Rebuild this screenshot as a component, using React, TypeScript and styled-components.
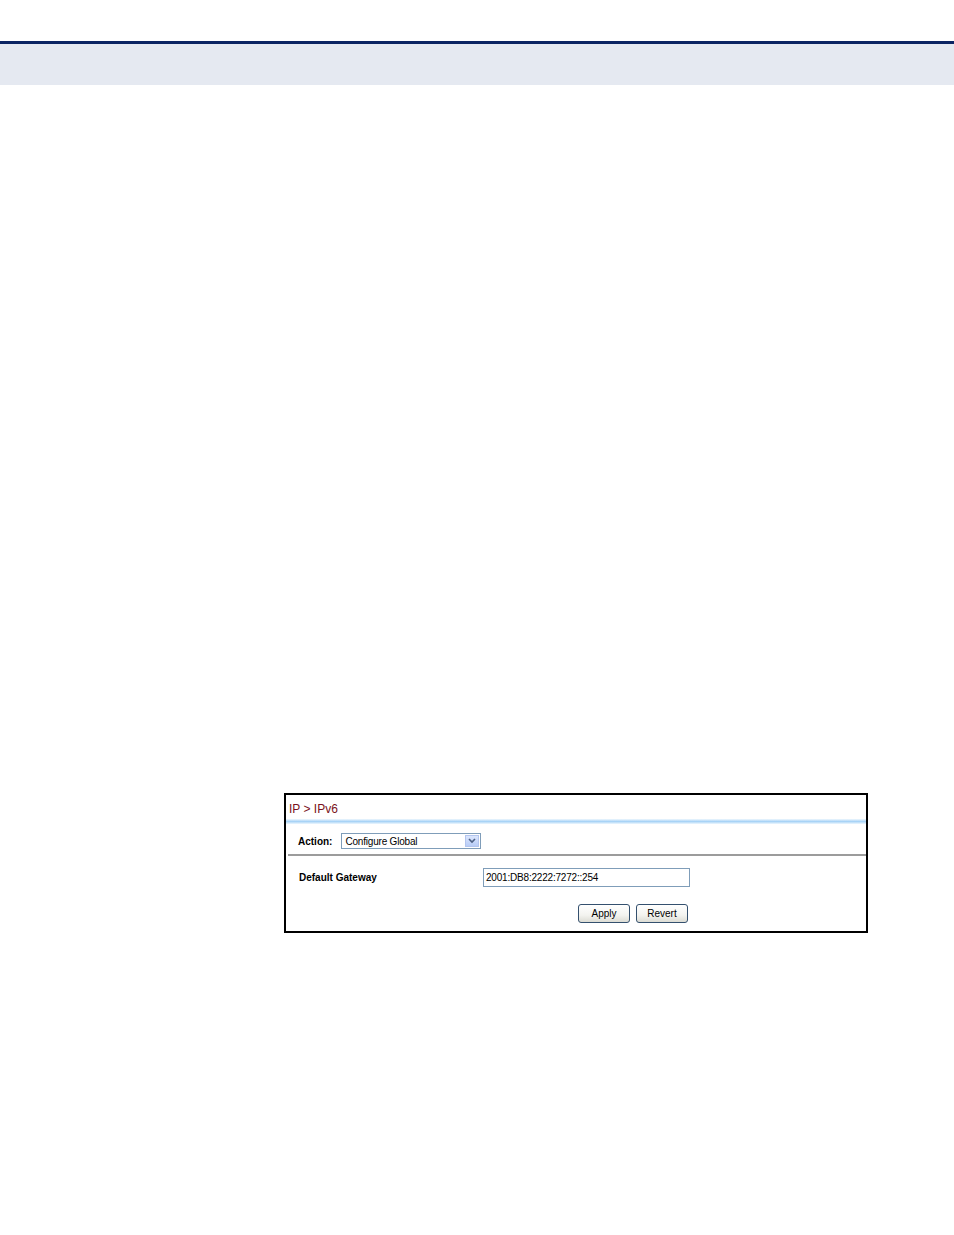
import React from "react";
import styled, { createGlobalStyle } from "styled-components";

const Global = createGlobalStyle`
  html, body { margin: 0; padding: 0; background: #ffffff; }
  body { font-family: "Liberation Sans", Arial, sans-serif; }
`;

const Page = styled.div`
  width: 954px;
  min-height: 1235px;
  background: #ffffff;
`;

const HeaderBand = styled.div`
  margin-top: 41px;
  border-top: 3px solid #0b2463;
  height: 41px;
  background: #e5e9f1;
`;

const Panel = styled.div`
  margin: 708px 0 0 284px;
  width: 580px;
  border: 2px solid #000000;
  background: #ffffff;
  font-size: 10px;
  color: #000000;
`;

const TitleBar = styled.div`
  height: 24px;
  padding-left: 3px;
  display: flex;
  align-items: center;
  padding-top: 4px;
  box-sizing: border-box;
  font-size: 12px;
  color: #7a1220;
`;

const BlueRule = styled.div`
  height: 5px;
  background: linear-gradient(to bottom, #f0f8fe 0%, #a8d3f6 50%, #eef7fe 100%);
`;

const ActionRow = styled.div`
  display: flex;
  align-items: center;
  gap: 9px;
  padding: 9px 0 5px 12px;
`;

const Label = styled.span`
  font-weight: bold;
  font-size: 10px;
`;

const Select = styled.div`
  width: 138px;
  height: 14px;
  border: 1px solid #7f9db9;
  display: flex;
  align-items: center;
  justify-content: space-between;
  background: #fff;
`;

const SelectText = styled.span`
  padding-left: 3px;
  font-size: 10px;
  letter-spacing: -0.2px;
`;

const ArrowBox = styled.span`
  width: 14px;
  height: 12px;
  margin-right: 1px;
  background: linear-gradient(to bottom, #dbe6fd, #b8cdf7);
  border: 1px solid #b3c5ee;
  box-sizing: border-box;
  display: flex;
  align-items: center;
  justify-content: center;
`;

const GrayRule = styled.div`
  margin-left: 2px;
  height: 2px;
  background: #9c9c9c;
`;

const FormRow = styled.div`
  display: grid;
  grid-template-columns: 184px 207px;
  align-items: center;
  padding: 12px 0 0 13px;
`;

const Input = styled.div`
  height: 17px;
  border: 1px solid #7f9db9;
  display: flex;
  align-items: center;
  padding-left: 2px;
  font-size: 10px;
  letter-spacing: -0.2px;
`;

const ButtonRow = styled.div`
  display: flex;
  gap: 6px;
  padding: 17px 0 8px 292px;
`;

const Button = styled.div`
  width: 52px;
  height: 19px;
  box-sizing: border-box;
  border: 1px solid #34506e;
  border-radius: 3px;
  background: linear-gradient(to bottom, #ffffff 0%, #f3f3ef 60%, #dcdcd4 100%);
  display: flex;
  align-items: center;
  justify-content: center;
  font-size: 10px;
`;

export default function App() {
  return (
    <Page>
      <Global />
      <HeaderBand />
      <Panel>
        <TitleBar>IP &gt; IPv6</TitleBar>
        <BlueRule />
        <ActionRow>
          <Label>Action:</Label>
          <Select>
            <SelectText>Configure Global</SelectText>
            <ArrowBox>
              <svg width="8" height="6" viewBox="0 0 8 6">
                <path d="M1 1 L4 4 L7 1" stroke="#4d6185" strokeWidth="1.6" fill="none" />
              </svg>
            </ArrowBox>
          </Select>
        </ActionRow>
        <GrayRule />
        <FormRow>
          <Label>Default Gateway</Label>
          <Input>2001:DB8:2222:7272::254</Input>
        </FormRow>
        <ButtonRow>
          <Button>Apply</Button>
          <Button>Revert</Button>
        </ButtonRow>
      </Panel>
    </Page>
  );
}
